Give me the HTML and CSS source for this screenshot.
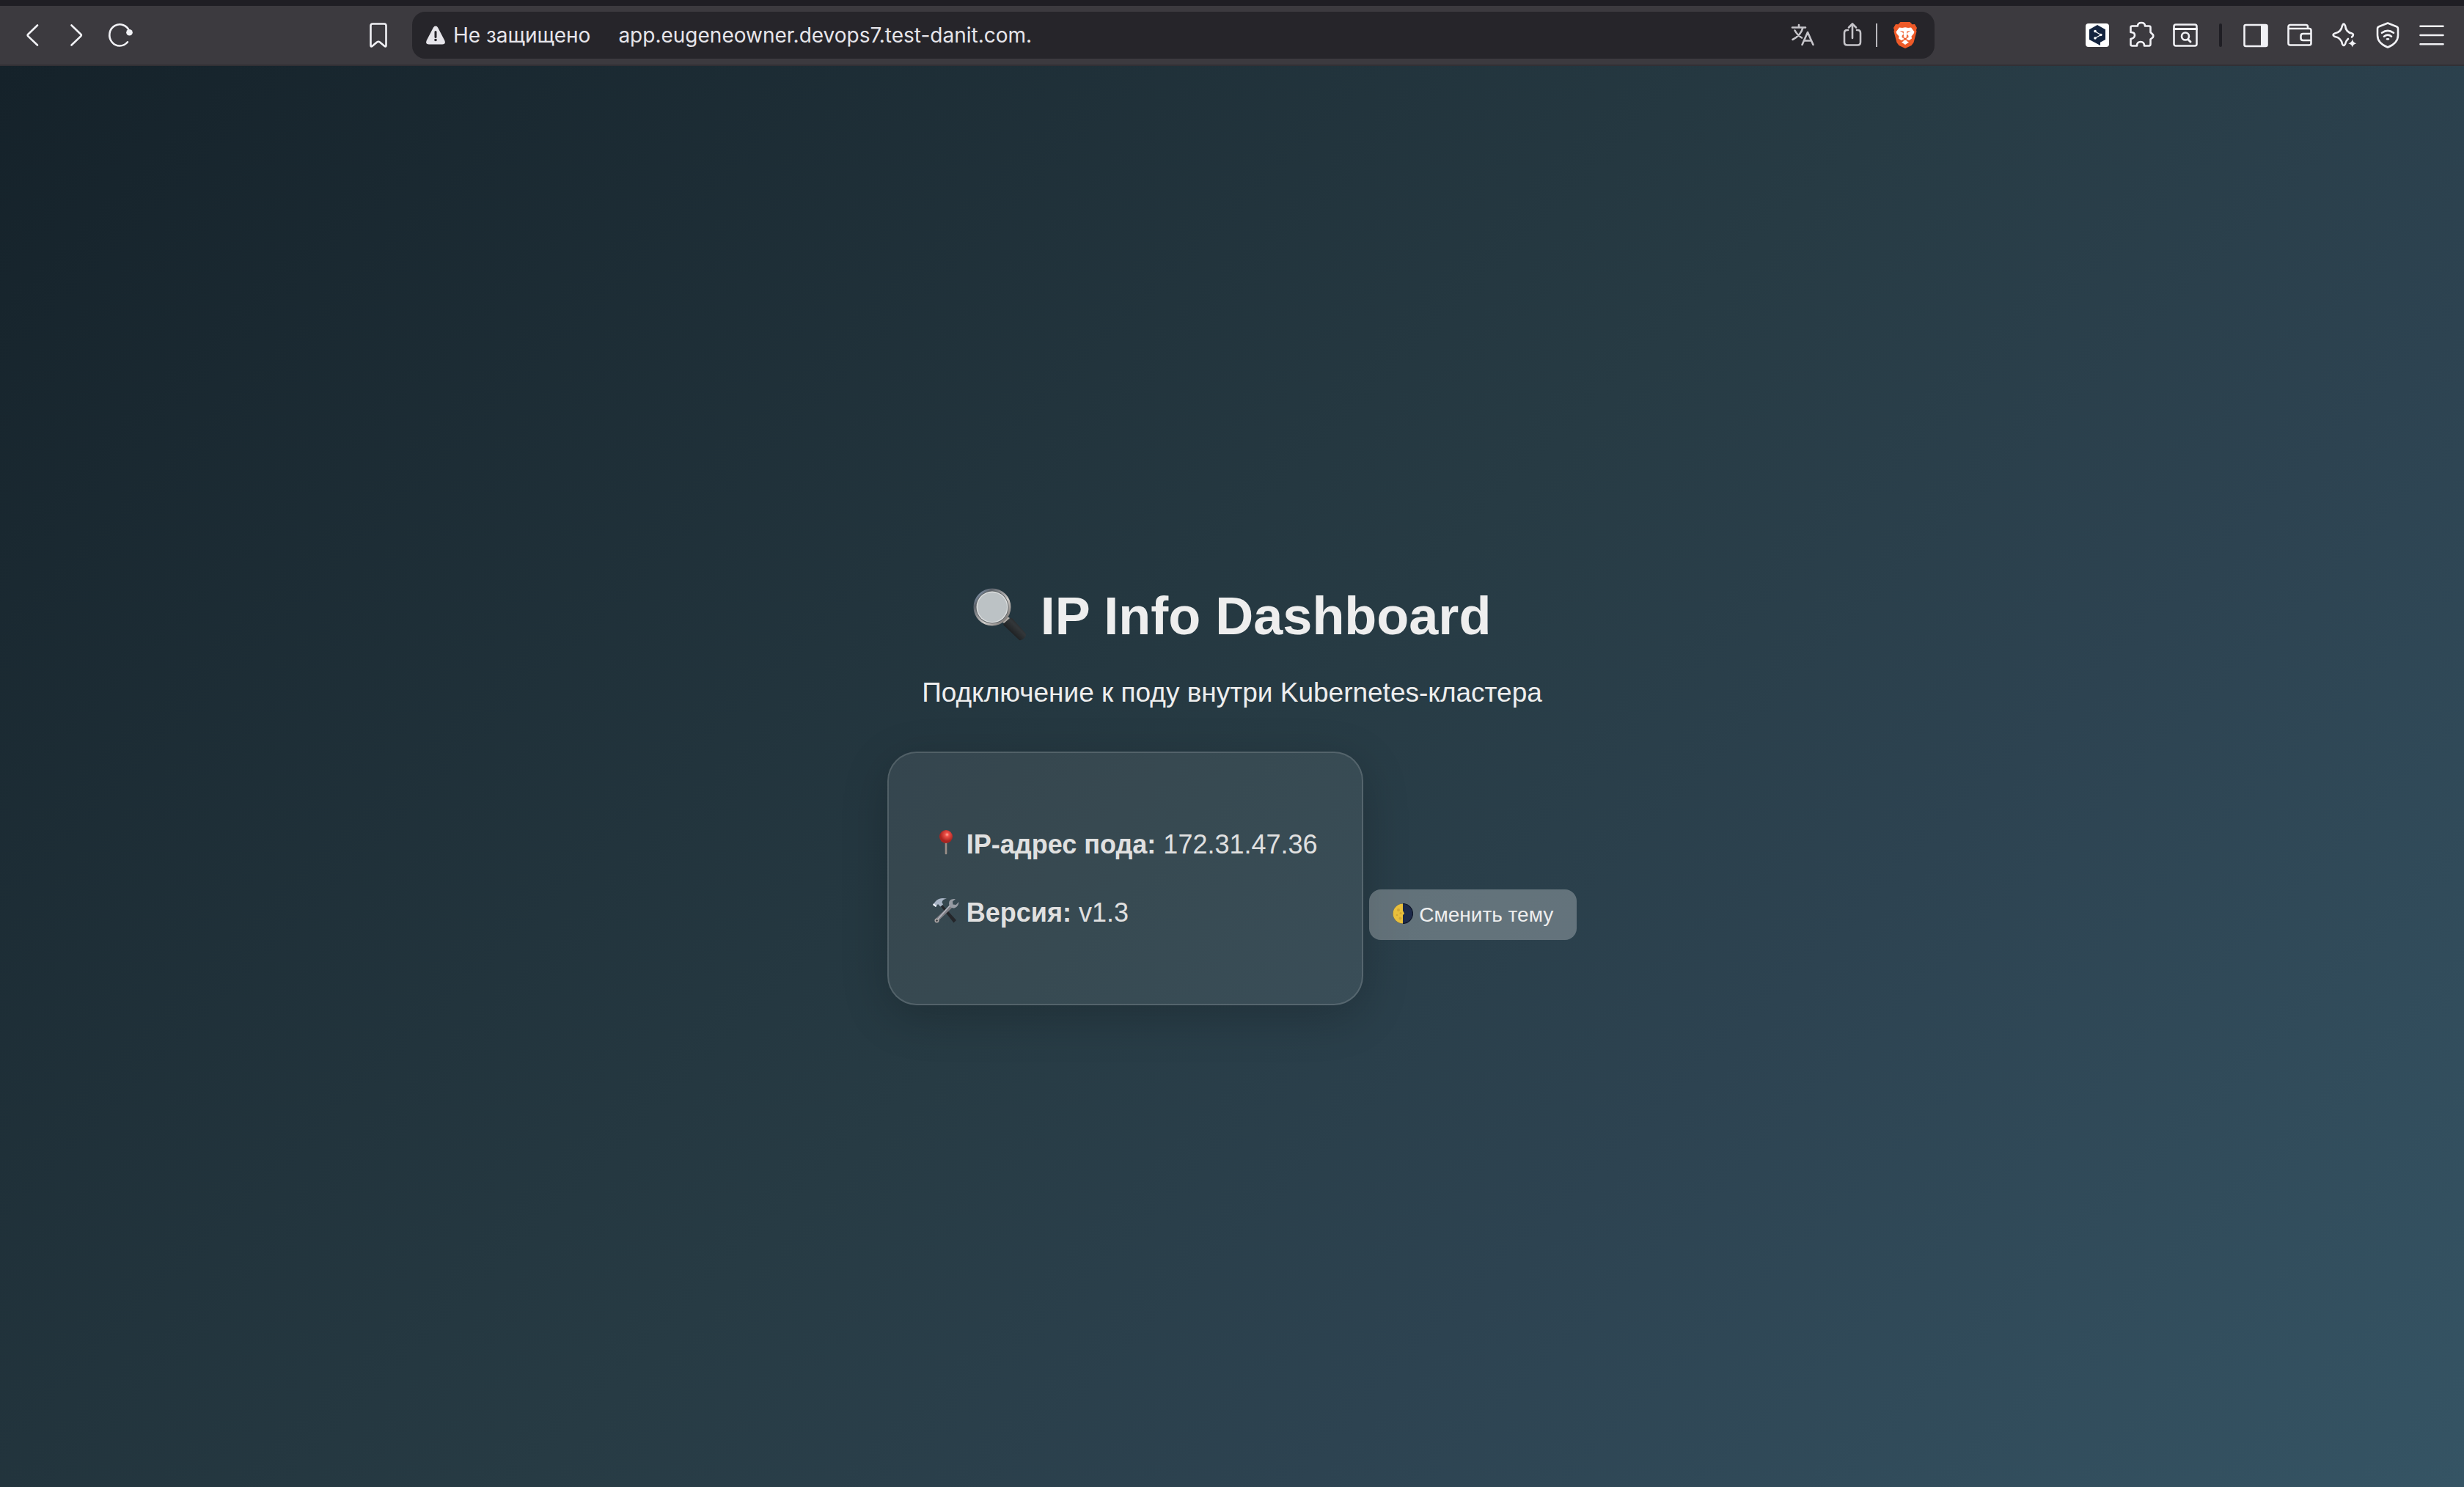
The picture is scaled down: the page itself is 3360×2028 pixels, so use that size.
FILE: index.html
```html
<!DOCTYPE html>
<html lang="ru">
<head>
<meta charset="utf-8">
<title>IP Info Dashboard</title>
<link rel="stylesheet" href="styles.css">
</head>
<body>
<header class="toolbar">
  <nav class="nav">
    <div class="group">
      <button class="tool" aria-label="Назад"><svg class="icon" viewBox="0 0 40 40"><path d="M27 6.500L14.300 18.700q-1.300 1.300 0 2.600L27 33.500"/></svg></button>
      <button class="tool" aria-label="Вперёд"><svg class="icon" viewBox="0 0 40 40"><path d="M13.500 6.500L26.200 18.700q1.300 1.300 0 2.600L13.500 33.500"/></svg></button>
      <button class="tool" aria-label="Обновить"><svg class="icon" viewBox="0 0 40 40"><path d="M32.500 15A14 14.600 0 1 0 30 29.300"/><circle class="fill" cx="32.500" cy="16.300" r="4.300"/></svg></button>
    </div>
    <button class="tool" aria-label="Закладка"><svg class="icon" viewBox="0 0 40 40"><path d="M9.500 34V7q0-2.500 2.500-2.500h16q2.500 0 2.500 2.500v27q0 2-2 1l-6.500-5.500q-2-1.500-4 0L11.500 35q-2 1-2-1z"/></svg></button>
  </nav>
  <form class="address">
    <svg class="warn" viewBox="0 0 28 28"><path d="M14 1.500q2 0 3.200 2.200l9 17.300q2.300 5.500-3.200 5.500H5q-5.500 0-3.200-5.500l9-17.300Q12 1.500 14 1.500z" fill="#e6e5ea"/><path d="M14 9.500v7" stroke="#26252a" stroke-width="3" stroke-linecap="round"/><circle cx="14" cy="20.500" r="1.800" fill="#26252a"/></svg>
    <label class="security" for="url">Не защищено</label>
    <input class="url" id="url" type="text" value="app.eugeneowner.devops7.test-danit.com.">
    <div class="group actions">
      <button class="tool tool-dim" type="button" aria-label="Перевести"><svg class="icon" viewBox="0 0 40 40"><path d="M6 9.500h18M15 6v3.500M20.500 9.500Q18 20 6.500 26M9.500 13.500Q13 20 19 23.500M19.500 33l7.500-17 7.500 17M22 27.500h10"/></svg></button>
      <button class="tool tool-dim" type="button" aria-label="Поделиться"><svg class="icon" viewBox="0 0 40 40"><path d="M14 13h-1q-4 0-4 4v12.500q0 4 4 4h14q4 0 4-4V17q0-4-4-4h-1M20 24V4.500M15 9.500l5-5 5 5"/></svg></button>
    </div>
    <span class="rule"></span>
    <button class="tool" type="button" aria-label="Brave Shields"><svg class="icon" viewBox="0 0 40 40"><g stroke="none"><path fill="#ee5a28" d="M13.500 2h13l3 3.300 3.500-.3 3 5-1 3 .5 2-4 15-3 4L20 38l-8.500-4-3-4-4-15 .5-2-1-3 3-5 3.500.3z"/><path fill="#fff" d="M12 9.500l4 .5 4-.8 4 .8 4-.5 4.500 6-1 2.500-3 3.500.5 3-3.500 2.500-5.500 2-5.500-2L11 24.500l.5-3-3-3.500-1-2.500z"/><path fill="#fff" d="M15 29.500l5-2.500 5 2.500-5 3.500z"/><path fill="#ee5a28" d="M12.500 14l5.500 1-.5 4.500 1 2L15 23l2 .8 3 2.200 3-2.200 2-.8-3.500-1.500 1-2L22 15l5.500-1-5 3 1 3 1.500 1.300L20 24l-5-2.700 1.500-1.300 1-3z"/><path fill="none" stroke="#ee5a28" stroke-width="1.600" d="M14 28.500l6-3 6 3"/></g></svg></button>
  </form>
  <nav class="group group-end">
    <button class="tool" aria-label="DeepL"><svg class="icon" viewBox="0 0 40 40"><g stroke="none"><rect x="4" y="4" width="32" height="32" rx="4" fill="#fff"/><path d="M20 6l11 6.200V26l-7 3.800V34l-6-3.200L9 26V12.200z" fill="#14243f"/></g><path d="M17 15l8 4.500-8 4.500" stroke="#fff" stroke-width="1.300"/><g fill="#fff" stroke="none"><circle cx="17" cy="14.600" r="1.800"/><circle cx="24.800" cy="19.500" r="1.800"/><circle cx="17" cy="24" r="1.800"/></g></svg></button>
    <button class="tool" aria-label="Расширения"><svg class="icon" viewBox="0 0 40 40"><path d="M5.500 9.500q0-2 2-2H15q0-4.500 5-4.500t5 4.500h5.500q2 0 2 2V16l3.500 3.500q1 3-1.500 4.500l-2 1.500V32q0 2.500-2 2.500H24q0-5.500-5-5.500t-5 5.500H7.500q-2 0-2-2V25q5.500-1 5.500-5t-5.500-4z"/></svg></button>
    <button class="tool" aria-label="Поиск вкладок"><svg class="icon" viewBox="0 0 40 40"><rect x="4.500" y="5.500" width="31" height="29" rx="2.500"/><path d="M4.500 11.500h31M24 26l3 3" stroke-width="3"/><circle cx="20" cy="21.500" r="5"/></svg></button>
    <span class="rule rule-dark"></span>
    <button class="tool" aria-label="Боковая панель"><svg class="icon" viewBox="0 0 40 40"><rect x="4.500" y="6" width="31" height="29" rx="2"/><path class="fill" d="M27 6h8v29h-8z"/></svg></button>
    <button class="tool" aria-label="Кошелёк"><svg class="icon" viewBox="0 0 40 40"><path d="M31 11V8.500q0-2.500-2.500-2.500H7Q4.500 6 4.500 8.500V31Q4.500 33.500 7 33.500h26q2.500 0 2.500-2.500V13.500Q35.500 11 33 11H4.500M35.500 18h-11q-3 0-3 3v3q0 3 3 3h11"/></svg></button>
    <button class="tool" aria-label="Leo AI"><svg class="icon" viewBox="0 0 40 40"><path d="M31 22.500q4-3.500 0-5-8-1.500-9-10.500-2-5-4 0-1.500 9-10 10.500-5 2 0 4.500 8.500 1.500 10 10 2 4 4 0 1-4.500 4-7"/><path class="fill" d="M31.800 25.500q1 4.500 5.500 5.700-4.500 1-5.500 5.300-1-4.300-5.500-5.300 4.500-1.200 5.500-5.700z"/></svg></button>
    <button class="tool" aria-label="VPN"><svg class="icon" viewBox="0 0 40 40"><path d="M20 3.500l12 4.700q2 .8 2 3V20q0 11-14 16.500Q6 31 6 20v-8.800q0-2.200 2-3zM12 16.800q8-6 16 0M15 21.700q5-4 10 0"/><ellipse class="fill" cx="20" cy="25.300" rx="2.400" ry="1.400"/></svg></button>
    <button class="tool" aria-label="Меню"><svg class="icon" viewBox="0 0 40 40"><path d="M4.500 7.700h31M4.500 20h31M4.500 32.300h31"/></svg></button>
  </nav>
</header>
<main class="page">
  <h1 class="title"><svg class="emoji" viewBox="0 0 72 72" aria-hidden="true"><defs><linearGradient id="rim" x1="0" y1="0" x2="1" y2="1"><stop offset="0" stop-color="#a9c8ee"/><stop offset=".25" stop-color="#5b6068"/><stop offset=".6" stop-color="#d0cdca"/><stop offset="1" stop-color="#55504e"/></linearGradient><linearGradient id="grip" x1="0" y1="1" x2="1" y2="0"><stop offset="0" stop-color="#050505"/><stop offset=".6" stop-color="#33373a"/><stop offset="1" stop-color="#0b0b0b"/></linearGradient></defs><path d="M42 48l8-7q2-1 4 1l16 18q4 4 0 8t-7 3L43 52q-3-2-1-4z" fill="url(#grip)"/><path d="M40 46l7-7 3 2-8 7z" fill="#b5b0aa"/><circle cx="26" cy="26" r="25.500" fill="url(#rim)"/><circle cx="26" cy="26" r="22.500" fill="#5f6468"/><circle cx="26" cy="26" r="21.500" fill="#dcdede"/><circle cx="26" cy="26" r="20" fill="#bcc2c5"/></svg> IP Info Dashboard</h1>
  <p class="lead">Подключение к поду внутри Kubernetes-кластера</p>
  <div class="panel">
    <section class="card">
      <p class="fact"><svg class="emoji" viewBox="0 0 36 36" aria-hidden="true"><defs><radialGradient id="ball" cx=".58" cy=".35"><stop offset="0" stop-color="#ffb0a0"/><stop offset=".3" stop-color="#ef5048"/><stop offset="1" stop-color="#a82420"/></radialGradient></defs><path d="M18 17v16" stroke="#9a8f88" stroke-width="2.600" stroke-linecap="round"/><circle cx="18" cy="10" r="9" fill="url(#ball)"/></svg> <strong>IP-адрес пода:</strong> 172.31.47.36</p>
      <p class="fact"><svg class="emoji" viewBox="0 0 36 36" aria-hidden="true"><path d="M12 9l20 22-3.500 3.500L10 11z" fill="#24262a"/><path d="M24 13L5 31" stroke="#7f7e84" stroke-width="4.500" stroke-linecap="round"/><path d="M25 9L6.500 30" stroke="#b4b7c0" stroke-width="1.500"/><circle cx="5.500" cy="31.500" r="3" fill="#aaa5a5"/><circle cx="5.500" cy="31.500" r="1.200" fill="#33363b"/><path d="M31 2q-9-1-9 6 0 3 1.500 4.500 3 3 7 1.500 4.500-2 5-8l-4 4-4-.5-.5-4z" fill="#969ba3"/><path d="M0 10l4-5Q9-.5 19 1.500q-6 1-6.500 5l1.500 3-3.500 3L7 9l-3 4z" fill="#a8b4c5"/><path d="M0 10l1.500-2L5 11.500 4 13z" fill="#eef2f8"/></svg> <strong>Версия:</strong> v1.3</p>
    </section>
    <button class="theme" type="button"><svg class="emoji" viewBox="0 0 28 28" aria-hidden="true"><circle cx="14" cy="14" r="13.500" fill="#1d2a4a"/><path d="M14 .5a13.500 13.500 0 0 0 0 27z" fill="#e9bf3c"/><path d="M14 .5a13.500 13.500 0 0 1 0 27" fill="none" stroke="#101727" stroke-width="1.200"/><path d="M14 10l2 4-2 2z" fill="#e9bf3c"/><g fill="#d3a634"><circle cx="8" cy="9" r="2"/><circle cx="11" cy="13.500" r="1.500"/><circle cx="6" cy="16" r="1.300"/><circle cx="10.500" cy="20.500" r="2"/></g></svg> Сменить тему</button>
  </div>
</main>
</body>
</html>
```
FILE: styles.css
```css
* {
  box-sizing: border-box;
}

body {
  margin: 0;
  min-height: 100vh;
  display: flex;
  flex-direction: column;
  font-family: "Liberation Sans", Arial, sans-serif;
  font-size: 32px;
  line-height: 57px;
  color: #eee;
}

button {
  border: 0;
  margin: 0;
  font-family: inherit;
  color: inherit;
}

/* Browser toolbar */

.toolbar {
  display: grid;
  grid-template-columns: 532px 1fr 692px;
  column-gap: 16px;
  align-items: center;
  height: 90px;
  padding: 0 14px;
  border-top: 8px solid #1f1e24;
  border-bottom: 2px solid #323035;
  background: #3c3a3f;
}

.nav {
  display: flex;
  justify-content: space-between;
}

.group {
  display: flex;
  align-items: center;
}

.group-end {
  justify-content: flex-end;
}

.actions {
  gap: 8px;
}

.tool {
  display: flex;
  align-items: center;
  justify-content: center;
  width: 60px;
  height: 60px;
  padding: 0;
  background: none;
  color: #f1f1f5;
}

.tool-dim {
  color: #c5c4c9;
}

.icon {
  width: 40px;
  height: 40px;
  fill: none;
  stroke: currentColor;
  stroke-width: 2.6;
  stroke-linecap: round;
  stroke-linejoin: round;
}

.fill {
  fill: currentColor;
  stroke: none;
}

.rule {
  width: 2px;
  height: 32px;
  margin: 0 8px 0 2px;
  background: #b9b8bd;
}

.rule-dark {
  width: 4px;
  margin: 0 16px;
  border-radius: 2px;
  background: #1f1e24;
}

.address {
  display: flex;
  align-items: center;
  height: 64px;
  margin: 0;
  padding: 0 10px 0 18px;
  border-radius: 18px;
  background: #26252a;
  font-family: Inter, "Liberation Sans", sans-serif;
  font-size: 28px;
  line-height: 40px;
  color: #e6e5ea;
}

.warn {
  width: 28px;
  height: 28px;
}

.security {
  margin: 0 38px 0 10px;
}

.url {
  flex: 1;
  min-width: 0;
  padding: 0;
  border: 0;
  background: none;
  font: inherit;
  color: inherit;
}

/* Dashboard */

.page {
  flex: 1;
  display: flex;
  flex-direction: column;
  justify-content: center;
  padding-top: 36px;
  text-align: center;
  background: linear-gradient(135deg, #15222a, #273b44 50%, #2d4351 70%, #355464);
}

.emoji {
  width: 1em;
  height: 1em;
  vertical-align: -3px;
}

.title {
  margin: 0 0 18px;
  font-size: 72px;
  line-height: 115px;
}

.title .emoji {
  vertical-align: -9px;
}

.lead {
  margin: 0 0 52px;
  font-size: 37px;
}

.card {
  display: inline-block;
  padding: 60px;
  border: 2px solid rgba(255, 255, 255, 0.14);
  border-radius: 40px;
  background: rgba(255, 255, 255, 0.08);
  box-shadow: 0 16px 64px rgba(0, 0, 0, 0.2);
  font-size: 36px;
  text-align: left;
  color: #e0e0e0;
}

.fact {
  margin: 36px 0;
}

.theme {
  padding: 0 32px;
  border-radius: 16px;
  background: rgba(255, 255, 255, 0.27);
  font-size: 28px;
  line-height: 69px;
}
```
